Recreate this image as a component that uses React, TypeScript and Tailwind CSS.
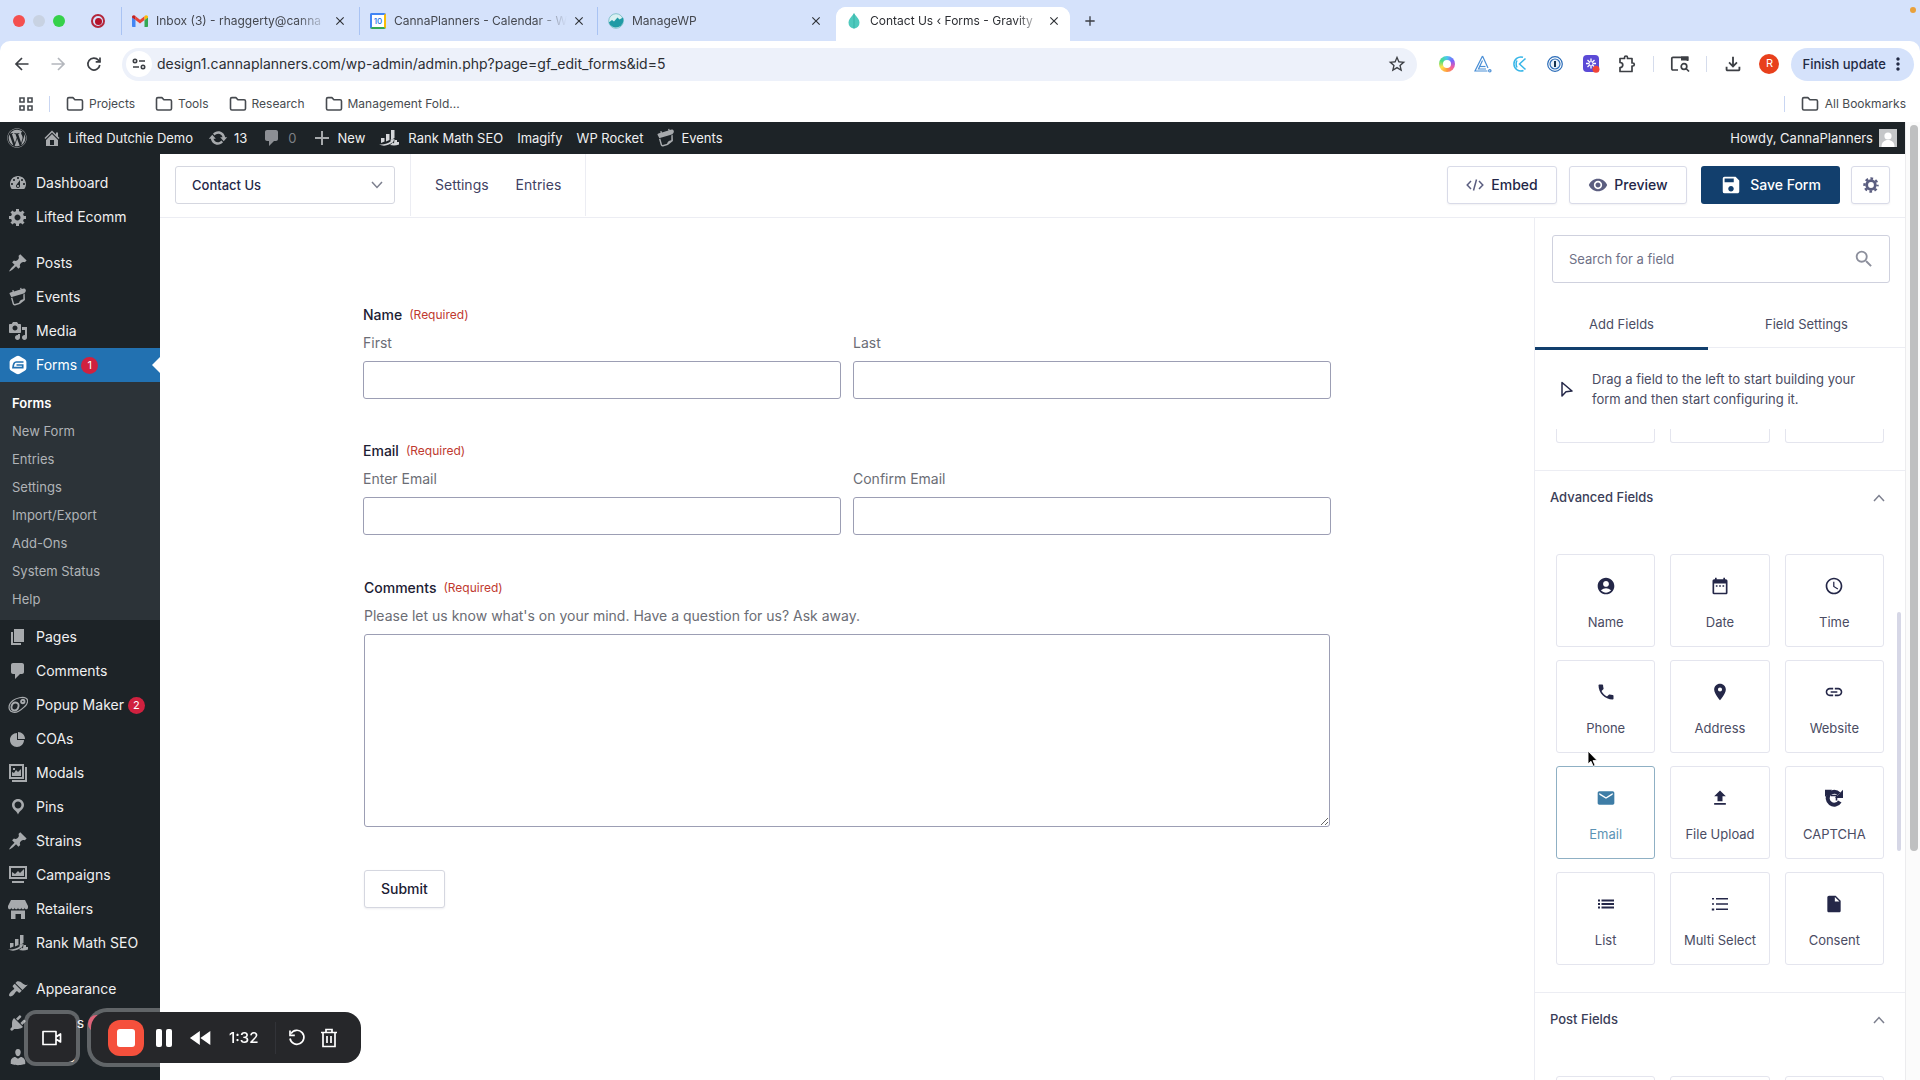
import React from "react";
import {
  MdAccountCircle, MdDateRange, MdAccessTime, MdPhone, MdPlace, MdLink, MdEmail,
  MdFileUpload, MdInsertDriveFile, MdSearch, MdVisibility, MdSave, MdOutlineFileDownload,
  MdStarBorder, MdFastRewind, MdClose, MdAdd, MdMoreVert,
} from "react-icons/md";
import { FaWordpress } from "react-icons/fa";

const P = {
  dashboard: "M3.76 16h12.48c1.1-1.37 1.76-3.11 1.76-5 0-4.42-3.58-8-8-8s-8 3.58-8 8c0 1.89.66 3.63 1.76 5zM10 4c.55 0 1 .45 1 1s-.45 1-1 1-1-.45-1-1 .45-1 1-1zM6 6c.55 0 1 .45 1 1s-.45 1-1 1-1-.45-1-1 .45-1 1-1zm8 0c.55 0 1 .45 1 1s-.45 1-1 1-1-.45-1-1 .45-1 1-1zm-5.37 5.55L12 7v6c0 1.1-.9 2-2 2s-2-.9-2-2c0-.57.24-1.08.63-1.45zM4 10c.55 0 1 .45 1 1s-.45 1-1 1-1-.45-1-1 .45-1 1-1zm12 0c.55 0 1 .45 1 1s-.45 1-1 1-1-.45-1-1 .45-1 1-1zm-5 3c0-.55-.45-1-1-1s-1 .45-1 1 .45 1 1 1 1-.45 1-1z",
  generic: "M18 12h-2.18c-.17.7-.44 1.35-.81 1.93l1.54 1.54-2.1 2.1-1.54-1.54c-.58.36-1.23.63-1.91.79V19H8v-2.18c-.68-.16-1.33-.43-1.91-.79l-1.54 1.54-2.12-2.12 1.54-1.54c-.36-.58-.63-1.23-.79-1.91H1V9.03h2.17c.16-.7.44-1.35.8-1.94L2.43 5.55l2.1-2.1 1.54 1.54c.58-.37 1.24-.64 1.93-.81V2h3v2.18c.68.16 1.33.43 1.91.79l1.54-1.54 2.12 2.12-1.54 1.54c.36.59.64 1.24.8 1.94H18V12zm-8.5 1.5c1.66 0 3-1.34 3-3s-1.34-3-3-3-3 1.34-3 3 1.34 3 3 3z",
  post: "M10.44 3.02l1.82-1.82 6.36 6.35-1.83 1.82c-1.05-.68-2.48-.57-3.41.36l-.75.75c-.92.93-1.04 2.35-.35 3.41l-1.83 1.82-2.41-2.41-2.8 2.79c-.42.42-3.38 2.71-3.8 2.29s1.86-3.39 2.28-3.81l2.79-2.79L4.1 9.36l1.83-1.82c1.05.69 2.48.57 3.4-.36l.75-.75c.93-.92 1.05-2.35.36-3.41z",
  media: "M13 11V4c0-.55-.45-1-1-1h-1.67L9 1H5L3.67 3H2c-.55 0-1 .45-1 1v7c0 .55.45 1 1 1h10c.55 0 1-.45 1-1zM7 4.5c1.38 0 2.5 1.12 2.5 2.5S8.38 9.5 7 9.5 4.5 8.38 4.5 7 5.62 4.5 7 4.5zM14 6h5v10.5c0 1.38-1.12 2.5-2.5 2.5S14 17.88 14 16.5s1.12-2.5 2.5-2.5c.17 0 .34.02.5.05V9h-3V6zm-4 8.05V13h2v3.5c0 1.38-1.12 2.5-2.5 2.5S7 17.88 7 16.5 8.12 14 9.5 14c.17 0 .34.02.5.05z",
  page: "M6 15V2h10v13H6zm-1 1h8v2H3V5h2v11z",
  comment: "M5 2h9c1.1 0 2 .9 2 2v7c0 1.1-.9 2-2 2h-2l-5 5v-5H5c-1.1 0-2-.9-2-2V4c0-1.1.9-2 2-2z",
  pie: "M10 10V3c3.87 0 7 3.13 7 7h-7zM9 4v7h7c0 3.87-3.13 7-7 7s-7-3.13-7-7 3.13-7 7-7z",
  pin: "M10 2C6.69 2 4 4.69 4 8c0 2.02 1.17 3.71 2.53 4.89.43.37 1.18.96 1.85 1.83.74.97 1.41 2.01 1.62 2.71.21-.7.88-1.74 1.62-2.71.67-.87 1.42-1.46 1.85-1.83C14.83 11.71 16 10.02 16 8c0-3.31-2.69-6-6-6zm0 2.56c1.9 0 3.44 1.54 3.44 3.44S11.9 11.44 10 11.44 6.56 9.9 6.56 8 8.1 4.56 10 4.56z",
  appearance: "M14.48 11.06L7.41 3.99l1.5-1.5c.5-.56 2.3-.47 3.51.32 1.21.8 1.43 1.28 2.91 2.1 1.18.64 2.45 1.26 4.45.85zm-.71.71L6.7 4.7 4.93 6.47c-.39.39-.39 1.02 0 1.41l1.06 1.06c.39.39.39 1.03 0 1.42-.6.6-1.43 1.11-2.21 1.69-.35.26-.7.53-1.01.84C1.43 14.23.4 16.08 1.4 17.07c.99 1 2.84-.03 4.18-1.36.31-.31.58-.66.85-1.02.57-.78 1.08-1.61 1.69-2.21.39-.39 1.02-.39 1.41 0l1.06 1.06c.39.39 1.02.39 1.41 0z",
  plugins: "M13.11 4.36L9.87 7.6 8 5.73l3.24-3.24c.35-.34 1.05-.2 1.56.32.52.51.66 1.21.31 1.55zm-8 1.77l.91-1.12 9.01 9.01-1.19.84c-.71.71-2.63 1.16-3.82 1.16H6.14L4.9 17.26c-.59.59-1.54.59-2.12 0-.59-.58-.59-1.53 0-2.12l1.24-1.24v-3.88c0-1.13.4-3.19 1.09-3.89zm7.26 3.97l3.24-3.24c.34-.35 1.04-.21 1.55.31.52.51.66 1.21.31 1.55l-3.24 3.25z",
  users: "M10 9.25c-2.27 0-2.73-3.44-2.73-3.44C7 4.02 7.82 2 9.97 2c2.16 0 2.98 2.02 2.71 3.81 0 0-.41 3.44-2.68 3.44zm0 2.57L12.72 10c2.39 0 4.52 2.33 4.52 4.53v2.49s-3.65 1.13-7.24 1.13c-3.65 0-7.24-1.13-7.24-1.13v-2.49c0-2.25 1.94-4.48 4.47-4.48z",
  home: "M16 8.5l1.53 1.53-1.06 1.06L10 4.6l-6.47 6.49-1.06-1.06L10 2.5l4 4v-2h2v4zm-6-2.46l6 5.99V18H4v-5.97zM12 17v-5H8v5h4z",
  update: "M10.2 3.28c3.53 0 6.43 2.61 6.92 6h2.08l-3.5 4-3.5-4h2.32c-.45-1.97-2.21-3.45-4.32-3.45-1.45 0-2.73.71-3.54 1.78L4.95 5.66C6.23 4.2 8.11 3.28 10.2 3.28zm-.4 13.44c-3.52 0-6.43-2.61-6.92-6H.8l3.5-4c1.17 1.33 2.33 2.67 3.5 4H5.48c.45 1.97 2.21 3.45 4.32 3.45 1.45 0 2.73-.71 3.54-1.78l1.71 1.95c-1.28 1.46-3.15 2.38-5.25 2.38z",
  plus: "M17 9v2h-6v6H9v-6H3V9h6V3h2v6z",
  events: "M1 5.2L4 4.2 3.6 2.6 5 2.2l.5 1.6 7.2-2.2L12.300 0l1.300-.4.5 1.600 2.400-.7c.8-.2 1.500.1 1.800.8l.5 1.800c-.6 1.500-1.200 2.400-2.400 3.100L3.200 9.900c-.5.200-.9 0-1-.5L.6 6.500c-.2-.6 0-1.100.4-1.300zM2.200 11l1.500-.4 1.900 6.700c.1.400.4.600.8.500l4.800-1.400c.3-1.900 1.500-3.200 3.400-3.700l1.300-.3V7.300l1.500-1.200.3 7.200-5.600 4.500-5.300 1.600c-1.300.4-2.300-.2-2.700-1.500z",
  images: "M1 1h15v15H1V1zm2 2v11h11V3H3zm1 10V9l2 1 2-3 2 2 3-3v7H4zM5 5h2v2H5V5zm12-1h2v15H4v-2h13V4z",
  monitor: "M1 1h18v13H1V1zm2 2v9h14V3H3zm1 8V7l3 2 3-3 2 2 4-4v7H4zm0 5h12v2H4v-2z",
  store: "M3 1h14l3 6v1.500c0 1-.8 1.800-1.700 1.800s-1.600-.8-1.600-1.800c0 1-.8 1.800-1.700 1.800s-1.700-.8-1.700-1.800c0 1-.7 1.800-1.600 1.800S10 9.500 10 8.500c0 1-.8 1.800-1.700 1.800s-1.600-.8-1.600-1.800c0 1-.8 1.800-1.700 1.800S3.300 9.500 3.300 8.500c0 1-.8 1.800-1.600 1.800S0 9.500 0 8.500V7zM3 11.500h14V20h-4v-5H7.500v5H3z",
  rank: "M2 10h3.500v3.500L2 15zM7 6h3.500v6L7 13.500zM12 2h3.500v8L12 12zM0 16.500c5 .5 9.500-1 12-3.500l-1-1.300 4.500-.7-.5 4.500-1.500-1.200C11 17 5 19 0 16.500zM15 12h3v2h2v2.500c-3 1.200-6 1.200-9 .5 2-1.200 3-2.500 4-5z",
};

function Dash({ d, className = "size-5" }: { d: string; className?: string }) {
  return (
    <svg viewBox="0 0 20 20" className={className} fill="currentColor" fillRule="evenodd" aria-hidden="true">
      <path d={d} />
    </svg>
  );
}

function PopupIcon() {
  return (
    <svg viewBox="0 0 20 20" className="size-5" fill="none" stroke="currentColor" strokeWidth="1.200" aria-hidden="true">
      <path d="M5 5.500C8 3 15 1.500 18 3.200s1.200 6-.8 7.800-4 4-7 5.500-7.500 1-8.700-2S2 8 5 5.500z" />
      <path d="M7.500 7.500c2.500 0 3.500 2 3 4s-2 4-4 4-3.500-1.500-3-4 2-4 4-4z" strokeWidth="1.900" />
      <circle cx="14.800" cy="6.500" r="1.700" strokeWidth="1.900" />
    </svg>
  );
}

function GravityIcon() {
  return (
    <svg viewBox="0 0 20 20" className="size-5" aria-hidden="true">
      <path d="M10 .8c.6 0 1.200.2 1.700.5l5 2.900c1 .6 1.700 1.700 1.700 2.900v5.800c0 1.200-.7 2.300-1.700 2.900l-5 2.900c-1 .6-2.400.6-3.400 0l-5-2.900c-1-.6-1.700-1.700-1.700-2.900V7.100c0-1.200.7-2.300 1.700-2.900l5-2.900C8.800 1 9.400.8 10 .8z" fill="#fff" />
      <path d="M15.500 7H8.200C6.300 7 5.300 9.500 5 12.700h9.700V10H8.500" fill="none" stroke="#2271b1" strokeWidth="1.700" />
    </svg>
  );
}

function Folder() {
  return (
    <svg viewBox="0 0 18 16" className="h-4 w-[18px]" fill="none" stroke="#474b50" strokeWidth="1.600" strokeLinejoin="round" aria-hidden="true">
      <path d="M1.500 3c0-.8.600-1.400 1.400-1.400h4l2 2.200h6.200c.8 0 1.400.6 1.400 1.400v7.400c0 .8-.6 1.400-1.400 1.400H2.900c-.8 0-1.400-.6-1.400-1.400z" />
    </svg>
  );
}

function Gmail() {
  return (
    <svg viewBox="0 0 16 12" className="h-3 w-4" aria-hidden="true">
      <path d="M0 2v9c0 .6.400 1 1 1h2.500V5z" fill="#4285f4" />
      <path d="M16 2v9c0 .6-.4 1-1 1h-2.500V5z" fill="#34a853" />
      <path d="M3.500 5V1.300L8 4.700l4.500-3.400V5L8 8.400z" fill="#ea4335" />
      <path d="M0 2C0 .2 2 -.5 3.500.9V5L0 2.500z" fill="#c5221f" />
      <path d="M16 2c0-1.800-2-2.500-3.500-1.100V5L16 2.500z" fill="#fbbc04" />
    </svg>
  );
}

function Calendar() {
  return (
    <span className="grid size-4 place-items-center rounded-[2px] border-2 border-t-[#4285f4] border-r-[#fbbc04] border-b-[#34a853] border-l-[#4285f4] bg-white text-[8px] leading-none font-medium text-[#1a73e8]">
      10
    </span>
  );
}

function ManageIcon() {
  return (
    <svg viewBox="0 0 16 16" className="size-4" aria-hidden="true">
      <circle cx="8" cy="8" r="7.300" fill="#d9f0f2" stroke="#6fb9c0" strokeWidth=".8" />
      <path d="M.8 9.500L4 7l2 1.500L9.500 4.500l2 2L15 4.500A7.300 7.300 0 1 1 .8 9.500z" fill="#1f9aa5" />
    </svg>
  );
}

function Drop() {
  return (
    <svg viewBox="0 0 16 16" className="size-4" aria-hidden="true">
      <path d="M8 .5c3 3.500 5.500 6 5.500 9A5.500 5.800 0 0 1 8 15.500 5.500 5.800 0 0 1 2.500 9.500C2.500 6.500 5 4 8 .5z" fill="#4fc9bd" />
      <path d="M8 .5v15" stroke="#37b3a8" strokeWidth="1" />
    </svg>
  );
}

function Tab({ icon, title, active = false }: { icon: React.ReactNode; title: string; active?: boolean }) {
  return (
    <div
      className={
        active
          ? "flex h-full w-[234px] items-center rounded-t-[10px] bg-white pr-2 pl-[10px]"
          : "flex h-full w-[238px] items-center border-l border-[#a9c3f3] pr-[11px] pl-[10px]"
      }
    >
      <span className="flex size-4 shrink-0 items-center justify-center">{icon}</span>
      <button
        type="button"
        className={
          active
            ? "ml-2 flex-1 text-left text-xs whitespace-nowrap text-[#2c2e33] [mask-image:linear-gradient(to_right,black_85%,transparent)]"
            : "ml-2 flex-1 text-left text-xs whitespace-nowrap text-[#44474e] [mask-image:linear-gradient(to_right,black_82%,transparent)]"
        }
      >
        {title}
      </button>
      <button type="button" aria-label={"Close " + title} className="ml-1 grid size-4 shrink-0 place-items-center text-[#2f3237]">
        <MdClose className="size-[14px]" />
      </button>
    </div>
  );
}

function TabStrip() {
  return (
    <div className="flex h-[41px] items-start bg-[#d5e2fb] pt-[7px]">
      <div className="flex h-[28px] w-[121px] shrink-0 items-center pl-[13px]">
        <span className="size-3 rounded-full bg-[#f4504f]" />
        <span className="ml-2 size-3 rounded-full bg-[#c8d2e2]" />
        <span className="ml-2 size-3 rounded-full bg-[#35d14a]" />
        <span className="ml-[26px] grid size-[14px] place-items-center rounded-full border-2 border-[#b3263b]">
          <span className="size-[7px] rounded-full bg-[#b5122a]" />
        </span>
      </div>
      <div className="flex h-[28px]">
        <Tab icon={<Gmail />} title="Inbox (3) - rhaggerty@canna" />
        <Tab icon={<Calendar />} title="CannaPlanners - Calendar - W" />
        <Tab icon={<ManageIcon />} title="ManageWP" />
      </div>
      <div className="ml-px flex h-[34px] rounded-t-[10px] bg-white pb-[6px]">
        <Tab icon={<Drop />} title="Contact Us ‹ Forms - Gravity" active />
      </div>
      <button type="button" aria-label="New tab" className="ml-[10px] grid h-[28px] w-5 place-items-center text-[#3b3e44]">
        <MdAdd className="size-4" />
      </button>
      <span className="mr-1 ml-auto size-[6px] rounded-full bg-[#e9a13b]" />
    </div>
  );
}

function Extensions() {
  const slot = "grid size-9 place-items-center";
  return (
    <div className="flex items-center">
      <button type="button" aria-label="Colour ring" className={slot}>
        <span className="grid size-4 place-items-center rounded-full bg-[conic-gradient(#4cc9f0,#7b61ff,#f25ca2,#ff9a3c,#ffe14d,#4ade80,#4cc9f0)]">
          <span className="size-2 rounded-full bg-white" />
        </span>
      </button>
      <button type="button" aria-label="Ruler" className={slot}>
        <svg viewBox="0 0 18 18" className="size-[18px]" fill="none" stroke="#4a8fd6" strokeWidth="1.200">
          <path d="M8.500 1L1 16h12.500M8.500 1l5.500 12M8.500 5.500l-4 8.500h7.500" />
          <path d="M5.500 11.500h6" />
          <circle cx="15.800" cy="15.800" r="1.200" />
        </svg>
      </button>
      <button type="button" aria-label="Keeper" className={slot}>
        <svg viewBox="0 0 16 16" className="size-4" fill="none" stroke="#38b6e8" strokeWidth="1.500">
          <path d="M12 1.300A7 7 0 1 0 12.500 14.500M14.500 2.500L8.500 8l6 5.500M6 4.500C5 6.500 5 9.500 6 11.500" />
        </svg>
      </button>
      <button type="button" aria-label="1Password" className={slot}>
        <svg viewBox="0 0 16 16" className="size-4">
          <circle cx="8" cy="8" r="7.300" fill="#fff" stroke="#2b6cb8" strokeWidth="1.200" />
          <circle cx="8" cy="8" r="5" fill="#e8f1fb" stroke="#2b6cb8" strokeWidth="1.200" />
          <rect x="7" y="5" width="2" height="6" fill="#16324f" />
        </svg>
      </button>
      <button type="button" aria-label="Loom" className={slot}>
        <svg viewBox="0 0 18 18" className="size-[18px]">
          <rect x="1" y="0" width="16" height="17" rx="4" fill="#5b4ad6" />
          <g stroke="#fff" strokeWidth="1.300">
            <path d="M9 3.500v10M4 8.500h10M5.500 5l7 7M12.500 5l-7 7" />
          </g>
          <circle cx="9" cy="8.500" r="1.500" fill="#5b4ad6" />
          <circle cx="14" cy="14.200" r="3.500" fill="#f04438" />
        </svg>
      </button>
      <button type="button" aria-label="Extensions" className={slot}>
        <svg viewBox="0 0 18 18" className="size-[18px]" fill="none" stroke="#3c3f44" strokeWidth="1.700" strokeLinejoin="round">
          <path d="M2 3.500h4.500V2.500a1.500 1.500 0 0 1 3 0v1H14v4.500h.8a1.500 1.500 0 0 1 0 3H14v5.500H2v-4c1.800 0 2.800-1 2.800-2.500S3.800 7.500 2 7.500z" />
        </svg>
      </button>
      <span className="mx-2 h-4 w-px bg-[#d5dcec]" />
      <button type="button" aria-label="Side search" className={slot}>
        <svg viewBox="0 0 20 18" className="h-[18px] w-5" fill="none" stroke="#3c3f44" strokeWidth="1.700">
          <path d="M8 15H3c-.8 0-1.200-.4-1.200-1.200V3.500c0-.8.4-1.200 1.200-1.200h14.500V6" />
          <path d="M11 1.500h7.500v4H11z" fill="#3c3f44" stroke="none" />
          <circle cx="14" cy="11.500" r="2.800" />
          <path d="M16 13.500l3 3" />
        </svg>
      </button>
      <span className="mx-2 h-4 w-px bg-[#d5dcec]" />
      <button type="button" aria-label="Downloads" className={slot}>
        <MdOutlineFileDownload className="size-[22px] text-[#3c3f44]" />
      </button>
      <button type="button" aria-label="Profile" className={slot}>
        <span className="grid size-5 place-items-center rounded-full bg-[#e8401c] text-[11px] text-white">R</span>
      </button>
    </div>
  );
}

function Toolbar() {
  return (
    <div className="flex h-[46px] items-center rounded-t-[10px] bg-white pr-[6px] pl-[12px]">
      <button type="button" aria-label="Back" className="grid size-5 place-items-center text-[#3c3f44]">
        <Arrow />
      </button>
      <button type="button" aria-label="Forward" className="ml-4 grid size-5 rotate-180 place-items-center text-[#b4b7bd]">
        <Arrow />
      </button>
      <button type="button" aria-label="Reload" className="ml-4 grid size-5 place-items-center text-[#3c3f44]">
        <svg viewBox="0 0 16 16" className="size-4" fill="none" stroke="currentColor" strokeWidth="1.700">
          <path d="M13.800 9A6 6 0 1 1 12.500 4.200L14 5.800" />
          <path d="M14 1.500v4.300H9.700" />
        </svg>
      </button>
      <div className="ml-[18px] flex h-[33px] flex-1 items-center rounded-full bg-[#edf1fa] pr-[10px] pl-1">
        <button type="button" aria-label="Site information" className="grid size-[26px] shrink-0 place-items-center rounded-full bg-white">
          <svg viewBox="0 0 14 14" className="size-[14px]" fill="none" stroke="#3c3f44" strokeWidth="1.600">
            <circle cx="3" cy="4" r="1.700" />
            <path d="M7 4h6M1 10h6" />
            <circle cx="11" cy="10" r="1.700" />
          </svg>
        </button>
        <input
          aria-label="Address"
          className="ml-[5px] min-w-0 flex-1 bg-transparent text-sm text-[#2b2e33] outline-none"
          defaultValue="design1.cannaplanners.com/wp-admin/admin.php?page=gf_edit_forms&id=5"
        />
        <button type="button" aria-label="Bookmark this page" className="grid size-5 place-items-center text-[#3c3f44]">
          <MdStarBorder className="size-5" />
        </button>
      </div>
      <div className="ml-[12px]">
        <Extensions />
      </div>
      <button type="button" className="ml-1 flex h-[33px] items-center rounded-full bg-[#d5e2fb] pr-[6px] pl-[11px] text-[13px] font-medium text-[#222a44]">
        Finish update
        <MdMoreVert className="ml-[2px] size-5" />
      </button>
    </div>
  );
}

function Arrow() {
  return (
    <svg viewBox="0 0 16 16" className="size-4" fill="none" stroke="currentColor" strokeWidth="1.700" aria-hidden="true">
      <path d="M14.500 8H2.500M8 2L2 8l6 6" />
    </svg>
  );
}

function Bookmarks() {
  const marks = ["Projects", "Tools", "Research", "Management Fold..."];
  return (
    <div className="flex h-[35px] items-center bg-white pr-[14px] pb-[2px] pl-[19px] text-xs text-[#474b50]">
      <button type="button" aria-label="Apps">
        <svg viewBox="0 0 14 14" className="size-[14px]" fill="none" stroke="#474b50" strokeWidth="1.600">
          <path d="M1 1h4v4H1zM9 1h4v4H9zM1 9h4v4H1zM9 9h4v4H9z" />
        </svg>
      </button>
      <span className="ml-4 h-4 w-px bg-[#c9d6f2]" />
      <div className="ml-4 flex gap-5">
        {marks.map((m) => (
          <a key={m} href="#" className="flex items-center gap-[5px]">
            <Folder />
            {m}
          </a>
        ))}
      </div>
      <span className="ml-auto h-4 w-px bg-[#c9d6f2]" />
      <a href="#" className="ml-4 flex items-center gap-[6px]">
        <Folder />
        All Bookmarks
      </a>
    </div>
  );
}

function AdminBar() {
  return (
    <div className="flex h-8 items-center bg-[#1d2327] pr-2 pl-[7px] text-[13px] text-[#f0f0f1]">
      <a href="#" aria-label="About WordPress" className="text-[#a7aaad]">
        <FaWordpress className="size-5" />
      </a>
      <a href="#" className="ml-[15px] flex items-center gap-[6px]">
        <Dash d={P.home} className="size-5 text-[#a7aaad]" />
        Lifted Dutchie Demo
      </a>
      <a href="#" className="ml-[15px] flex items-center gap-[6px]">
        <Dash d={P.update} className="size-5 text-[#a7aaad]" />
        13
      </a>
      <a href="#" className="ml-[15px] flex items-center gap-[6px] text-[#7d8186]">
        <Dash d={P.comment} className="size-5 text-[#8c8f94]" />
        0
      </a>
      <a href="#" className="ml-[15px] flex items-center gap-[6px]">
        <Dash d={P.plus} className="size-5 text-[#a7aaad]" />
        New
      </a>
      <a href="#" className="ml-[14px] flex items-center gap-[9px]">
        <Dash d={P.rank} className="size-5 text-[#d5d7da]" />
        Rank Math SEO
      </a>
      <a href="#" className="ml-[14px]">Imagify</a>
      <a href="#" className="ml-[14px]">WP Rocket</a>
      <a href="#" className="ml-[14px] flex items-center gap-[6px]">
        <Dash d={P.events} className="size-[18px] overflow-visible text-[#a7aaad]" />
        Events
      </a>
      <a href="#" className="ml-auto flex items-center gap-[6px]">
        Howdy, CannaPlanners
        <svg viewBox="0 0 18 18" className="size-[18px]" aria-hidden="true">
          <path d="M0 0h18v18H0z" fill="#c5c7c9" />
          <circle cx="9" cy="7" r="3.600" fill="#fff" />
          <path d="M2.500 18c0-5 3-7 6.500-7s6.500 2 6.500 7z" fill="#fff" />
        </svg>
      </a>
    </div>
  );
}

function Badge({ children }: { children: React.ReactNode }) {
  return <span className="-ml-1 grid size-[17px] place-items-center rounded-full bg-[#d0213f] text-[11px] leading-none text-white">{children}</span>;
}

function NavItem({ icon, label, badge }: { icon: React.ReactNode; label: string; badge?: string }) {
  return (
    <a href="#" className="flex h-[34px] items-center gap-2 pl-2 text-[#f0f0f1]">
      <span className="text-[#a7aaad]">{icon}</span>
      {label}
      {badge && <Badge>{badge}</Badge>}
    </a>
  );
}

function Sidebar() {
  const sub = ["New Form", "Entries", "Settings", "Import/Export", "Add-Ons", "System Status", "Help"];
  return (
    <nav aria-label="Admin menu" className="w-40 shrink-0 overflow-hidden bg-[#1d2327] pt-3 text-sm">
      <NavItem icon={<Dash d={P.dashboard} />} label="Dashboard" />
      <NavItem icon={<Dash d={P.generic} />} label="Lifted Ecomm" />
      <div className="h-3" />
      <NavItem icon={<Dash d={P.post} />} label="Posts" />
      <NavItem icon={<Dash d={P.events} className="size-5 overflow-visible p-px" />} label="Events" />
      <NavItem icon={<Dash d={P.media} />} label="Media" />
      <a href="#" className="flex h-[34px] items-center gap-2 bg-[#2271b1] pl-2 text-white">
        <GravityIcon />
        Forms
        <Badge>1</Badge>
        <svg viewBox="0 0 8 16" className="ml-auto h-4 w-2" aria-hidden="true">
          <path d="M8 0v16L0 8z" fill="#fff" />
        </svg>
      </a>
      <div className="bg-[#2c3338] py-[7px] text-[13px] text-[#b0b3b7]">
        <a href="#" className="flex h-7 items-center pl-3 font-semibold text-white">Forms</a>
        {sub.map((s) => (
          <a key={s} href="#" className="flex h-7 items-center pl-3">{s}</a>
        ))}
      </div>
      <NavItem icon={<Dash d={P.page} />} label="Pages" />
      <NavItem icon={<Dash d={P.comment} />} label="Comments" />
      <NavItem icon={<PopupIcon />} label="Popup Maker" badge="2" />
      <NavItem icon={<Dash d={P.pie} />} label="COAs" />
      <NavItem icon={<Dash d={P.images} />} label="Modals" />
      <NavItem icon={<Dash d={P.pin} />} label="Pins" />
      <NavItem icon={<Dash d={P.post} />} label="Strains" />
      <NavItem icon={<Dash d={P.monitor} />} label="Campaigns" />
      <NavItem icon={<Dash d={P.store} />} label="Retailers" />
      <NavItem icon={<Dash d={P.rank} />} label="Rank Math SEO" />
      <div className="h-3" />
      <NavItem icon={<Dash d={P.appearance} />} label="Appearance" />
      <NavItem icon={<Dash d={P.plugins} />} label="Plugins" badge="9" />
      <NavItem icon={<Dash d={P.users} />} label="Users" />
    </nav>
  );
}

function Chevron({ up = false }: { up?: boolean }) {
  return (
    <svg viewBox="0 0 12 8" className={up ? "h-2 w-3" : "h-2 w-3 rotate-180"} fill="none" stroke="#7c7f8e" strokeWidth="1.500" aria-hidden="true">
      <path d="M1 7l5-5.500L11 7" />
    </svg>
  );
}

function EditorHeader() {
  const btn = "flex h-[38px] items-center justify-center rounded-[3px] border border-[#d9dbe8] bg-white text-sm font-medium text-[#242748] shadow-[0_1px_2px_rgba(36,39,72,0.06)]";
  return (
    <header className="flex h-16 shrink-0 items-center border-b border-[#ecedf3] bg-white px-[15px] pb-px">
      <div className="relative w-[220px]">
        <select
          aria-label="Switch form"
          className="h-[38px] w-full appearance-none rounded-[3px] border border-[#d5d7e0] bg-white pl-4 text-[13px] font-medium text-[#242748]"
          defaultValue="Contact Us"
        >
          <option>Contact Us</option>
        </select>
        <span className="pointer-events-none absolute inset-y-0 right-3 flex items-center">
          <Chevron />
        </span>
      </div>
      <nav aria-label="Form" className="ml-[15px] flex h-full items-center gap-[27px] border-x border-[#ecedf3] px-6 text-sm text-[#3f4263]">
        <a href="#">Settings</a>
        <a href="#">Entries</a>
      </nav>
      <button type="button" className={btn + " ml-auto w-[110px] gap-[7px]"}>
        <svg viewBox="0 0 18 12" className="h-3 w-[18px]" fill="none" stroke="#5b5e80" strokeWidth="1.500" aria-hidden="true">
          <path d="M5 2L1.200 6 5 10M13 2l3.800 4L13 10M10.500.5l-3 11" />
        </svg>
        Embed
      </button>
      <button type="button" className={btn + " ml-3 w-[118px] gap-[6px]"}>
        <MdVisibility className="size-5 text-[#5b5e80]" />
        Preview
      </button>
      <button type="button" className="ml-[14px] flex h-[38px] w-[139px] items-center justify-center gap-2 rounded-[3px] bg-[#123f6d] text-sm font-medium text-white">
        <MdSave className="size-[22px]" />
        Save Form
      </button>
      <button type="button" aria-label="Editor preferences" className={btn + " ml-[11px] w-[39px]"}>
        <svg viewBox="0 0 16 16" className="size-4" fill="none" stroke="#5b5e80" aria-hidden="true">
          <circle cx="8" cy="8" r="4.300" strokeWidth="2.800" />
          <circle cx="8" cy="8" r="6.500" strokeWidth="2.400" strokeDasharray="2.700 2.405" strokeDashoffset="1.350" />
        </svg>
      </button>
    </header>
  );
}

const inputClass = "block h-[38px] w-full rounded-[3px] border border-[#9c9eb4] bg-white px-3 text-sm outline-none";

function Legend({ children }: { children: string }) {
  return (
    <span className="flex h-7 items-center gap-[7px] text-sm font-medium text-[#1c2033]">
      {children}
      <span className="text-xs font-normal text-[#c0392f]">(Required)</span>
    </span>
  );
}

function Pair({ id, legend, labels }: { id: string; legend: string; labels: [string, string] }) {
  return (
    <fieldset>
      <legend className="block w-full"><Legend>{legend}</Legend></legend>
      <div className="grid grid-cols-2 gap-3">
        {labels.map((l, i) => (
          <div key={l}>
            <label htmlFor={id + i} className="flex h-8 items-center pb-1 text-sm text-[#6b6d75]">{l}</label>
            <input id={id + i} type="text" className={inputClass} />
          </div>
        ))}
      </div>
    </fieldset>
  );
}

function Canvas() {
  return (
    <main className="min-w-0 flex-1 overflow-hidden bg-white pt-[83px]">
      <form className="mx-auto w-full max-w-[968px] space-y-[38px]">
        <Pair id="name" legend="Name" labels={["First", "Last"]} />
        <Pair id="email" legend="Email" labels={["Enter Email", "Confirm Email"]} />
        <div className="px-px pt-px">
          <label htmlFor="comments"><Legend>Comments</Legend></label>
          <p className="flex h-8 items-center pb-1 text-sm text-[#6b6d75]">
            Please let us know what's on your mind. Have a question for us? Ask away.
          </p>
          <textarea id="comments" className="block h-[193px] w-full rounded-[3px] border border-[#9c9eb4] bg-white px-3 outline-none" />
          <button type="submit" className="mt-[43px] h-[38px] rounded-[3px] border border-[#d5d7e0] bg-white px-4 text-sm font-medium text-[#1c2033] shadow-[0_1px_2px_rgba(36,39,72,0.08)]">
            Submit
          </button>
        </div>
      </form>
    </main>
  );
}

function Captcha() {
  return (
    <svg viewBox="0 0 18 18" className="size-[18px]" fill="none" stroke="currentColor" aria-hidden="true">
      <path d="M14.800 12.500A6.500 6.500 0 1 1 14 4.800" strokeWidth="4" />
      <path d="M18 .8V9h-8z" fill="currentColor" stroke="none" />
      <path d="M0 .8h7L0 8z" fill="currentColor" stroke="none" />
      <path d="M6 6.500h5.500v5" strokeWidth="1.600" />
    </svg>
  );
}

function Lines({ bold = false }: { bold?: boolean }) {
  return (
    <svg viewBox="0 0 18 16" className="h-4 w-[18px]" fill="currentColor" aria-hidden="true">
      {bold ? (
        <path d="M1 3.500h2v2H1zM1 7h2v2H1zM1 10.500h2v2H1zM4.500 3.500H17v2H4.500zM4.500 7H17v2H4.500zM4.500 10.500H17v2H4.500z" />
      ) : (
        <path d="M1 2h2v1.500H1zM1 7.200h2v1.600H1zM.8 12.500h2.400v2H.8zM5 2h12v1.600H5zM5 7.200h12v1.600H5zM5 12.400h12V14H5z" />
      )}
    </svg>
  );
}

const cardBase = "flex h-[93px] flex-col items-center rounded-[3px] border pt-[21px] text-[13px]";

function Card({ icon, label, hover = false }: { icon: React.ReactNode; label: string; hover?: boolean }) {
  return (
    <button
      type="button"
      className={cardBase + (hover ? " border-[#8fb0c4] bg-white text-[#3e7da6]" : " border-[#e4e5ee] bg-white text-[#242748]")}
    >
      <span className="grid h-[19px] place-items-center">{icon}</span>
      <span className={hover ? "mt-[17px] leading-5 text-[#5c93b4]" : "mt-[17px] leading-5 text-[#4a4c63]"}>{label}</span>
    </button>
  );
}

function SectionHead({ children }: { children: string }) {
  return (
    <button type="button" className="flex h-[55px] w-full shrink-0 items-center justify-between border-t border-[#ecedf3] pr-5 pb-px pl-[15px] text-left text-[13px] font-medium text-[#3a3d58]">
      {children}
      <Chevron up />
    </button>
  );
}

function FieldPanel() {
  const ic = "size-5";
  const cards: [React.ReactNode, string][] = [
    [<MdAccountCircle className={ic} />, "Name"],
    [<MdDateRange className={ic} />, "Date"],
    [<MdAccessTime className={ic} />, "Time"],
    [<MdPhone className={ic} />, "Phone"],
    [<MdPlace className={ic} />, "Address"],
    [<MdLink className={ic} />, "Website"],
    [<MdEmail className={ic} />, "Email"],
    [<MdFileUpload className={ic} />, "File Upload"],
    [<Captcha />, "CAPTCHA"],
    [<Lines bold />, "List"],
    [<Lines />, "Multi Select"],
    [<MdInsertDriveFile className={ic} />, "Consent"],
  ];
  const grid = "grid shrink-0 grid-cols-3 gap-x-[15px] gap-y-[13px] px-[21px]";
  return (
    <aside className="flex w-[371px] shrink-0 flex-col overflow-hidden border-l border-[#ecedf3] bg-white">
      <label className="mx-[15px] mt-[17px] ml-[17px] flex h-[48px] shrink-0 items-center rounded-[3px] border border-[#cfd1de] pr-[14px] pl-4 text-[13px] text-[#4a4c63]">
        <input type="text" aria-label="Search for a field" placeholder="Search for a field" className="min-w-0 flex-1 outline-none placeholder:text-[#6f7187]" />
        <MdSearch className="size-[22px] text-[#8c8f9c]" />
      </label>
      <div role="tablist" className="mt-[15px] flex h-[52px] shrink-0 text-[13px] text-[#4a4c63]">
        <button type="button" role="tab" aria-selected="true" className="w-[173px] border-b-[3px] border-[#123f6d] pt-[3px]">Add Fields</button>
        <button type="button" role="tab" aria-selected="false" className="mb-[2px] flex-1 border-b border-[#ecedf3] pt-[3px]">Field Settings</button>
      </div>
      <div className="flex h-[79px] shrink-0 items-start gap-[19px] pt-[19px] pl-[26px] text-[13px] leading-5 text-[#4a4c63]">
        <svg viewBox="0 0 12 17" className="mt-3 h-[17px] w-3 shrink-0" fill="none" stroke="#242748" strokeWidth="1.500" strokeLinejoin="round" aria-hidden="true">
          <path d="M1 1.500l10 8.500-6 .8L1 15z" />
        </svg>
        <p className="w-[275px]">Drag a field to the left to start building your form and then start configuring it.</p>
      </div>
      <div className="relative flex min-h-0 flex-1 flex-col overflow-hidden">
        <div className={grid + " mb-[27px]"}>
          {[0, 1, 2].map((i) => (
            <div key={i} className="h-[14px] rounded-b-[3px] border border-t-0 border-[#e4e5ee]" />
          ))}
        </div>
        <SectionHead>Advanced Fields</SectionHead>
        <div className={grid + " pt-[29px] pb-[27px]"}>
          {cards.map(([icon, label]) => (
            <Card key={label} icon={icon} label={label} hover={label === "Email"} />
          ))}
        </div>
        <SectionHead>Post Fields</SectionHead>
        <div className={grid + " pt-[29px]"}>
          {[0, 1, 2].map((i) => (
            <div key={i} className="h-[93px] rounded-[3px] border border-[#e4e5ee]" />
          ))}
        </div>
        <span className="absolute top-[183px] right-1 h-[239px] w-1 rounded-full bg-[#d6d7e6]" />
        <svg viewBox="0 0 12 18" className="absolute top-[321px] left-[52px] h-[18px] w-3" aria-hidden="true">
          <path d="M1 1v13l3-2.700 2.200 5 2-.9-2.200-4.800h4.200z" fill="#000" stroke="#fff" strokeWidth=".9" />
        </svg>
      </div>
    </aside>
  );
}

function Recorder() {
  const ring = "bg-[#26272a] ring-4 ring-white/30";
  return (
    <div className="fixed bottom-[17px] left-7 flex items-center gap-[15px] text-white">
      <button type="button" aria-label="Camera" className={ring + " grid size-12 place-items-center rounded-[8px]"}>
        <svg viewBox="0 0 22 18" className="h-[18px] w-[22px]" fill="none" stroke="#fff" strokeWidth="1.700" strokeLinejoin="round">
          <path d="M2 2.500h13v13H2zM15 8l4.500-3v8L15 10z" />
        </svg>
      </button>
      <div className={ring + " flex h-[51px] w-[270px] items-center rounded-[16px] pl-[17px]"}>
        <button type="button" aria-label="Stop recording" className="grid size-9 place-items-center rounded-[12px] bg-[#f5503c]">
          <span className="size-[18px] rounded-[3px] bg-white" />
        </button>
        <button type="button" aria-label="Pause" className="ml-3 flex gap-1">
          <span className="h-[18px] w-[6px] rounded-[2px] bg-white" />
          <span className="h-[18px] w-[6px] rounded-[2px] bg-white" />
        </button>
        <button type="button" aria-label="Rewind" className="ml-[15px]">
          <MdFastRewind className="size-7" />
        </button>
        <span className="ml-[14px] w-[34px] text-[15px] font-medium">1:32</span>
        <span className="ml-3 h-8 w-px bg-[#323338]" />
        <button type="button" aria-label="Restart" className="ml-3">
          <svg viewBox="0 0 18 18" className="size-[18px]" fill="none" stroke="#fff" strokeWidth="1.700">
            <path d="M3 4.500A7 7 0 1 1 2 9.500" />
            <path d="M2 1.500v4.800h4.800" />
          </svg>
        </button>
        <button type="button" aria-label="Delete" className="ml-[14px]">
          <svg viewBox="0 0 18 20" className="h-5 w-[18px]" fill="none" stroke="#fff" strokeWidth="1.700">
            <path d="M1 4.500h16M3 4.500v14h12v-14M6 4.500V1.500h6v3M7 8v7M11 8v7" />
          </svg>
        </button>
      </div>
    </div>
  );
}

export default function App() {
  return (
    <div className="flex h-screen flex-col overflow-hidden bg-[#d5e2fb] font-[Inter,sans-serif] text-sm antialiased">
      <TabStrip />
      <Toolbar />
      <Bookmarks />
      <div className="flex min-h-0 flex-1 bg-white">
        <div className="flex min-w-0 flex-1 flex-col">
          <AdminBar />
          <div className="flex min-h-0 flex-1">
            <Sidebar />
            <div className="flex min-w-0 flex-1 flex-col">
              <EditorHeader />
              <div className="flex min-h-0 flex-1">
                <Canvas />
                <FieldPanel />
              </div>
            </div>
          </div>
        </div>
        <div className="w-[15px] shrink-0 border-l border-[#ececee] bg-[#fbfbfb] pt-[3px] pl-[4px]">
          <div className="h-[76%] w-2 rounded-full bg-[#bfc0c1]" />
        </div>
      </div>
      <Recorder />
    </div>
  );
}
